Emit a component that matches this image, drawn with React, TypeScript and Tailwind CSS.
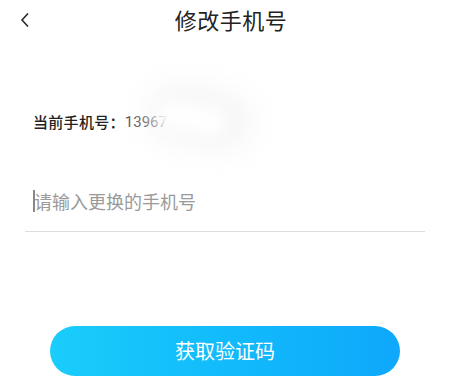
import { useState } from "react";

export default function App() {
  const [phone, setPhone] = useState("");

  return (
    <div
      className="w-[450px] h-[381px] bg-white overflow-hidden"
      style={{ fontFamily: '"Noto Sans CJK SC", "Noto Sans", sans-serif' }}
    >
      {/* Header */}
      <div className="relative h-[42px] flex items-center justify-center">
        <button className="absolute left-[18px] top-[11px] w-[14px] h-[18px] flex items-center justify-center">
          <svg width="10" height="16" viewBox="0 0 10 16" fill="none">
            <path d="M8 1.5L2 8l6 6.5" stroke="#222" strokeWidth="1.5" />
          </svg>
        </button>
        <h1 className="text-[22px] leading-none text-[#222] tracking-[0.5px] ml-[12px] -mt-[4px]">
          修改手机号
        </h1>
      </div>

      {/* Current phone */}
      <div className="relative mt-[69px] pl-[33px] flex items-center h-[22px]">
        <span className="text-[15px] text-[#222] font-medium tracking-[0.3px]">当前手机号：</span>
        <span className="text-[15px] text-[#555] ml-[0px]" style={{ fontFamily: "Roboto, sans-serif" }}>
          13967
        </span>
        <div className="absolute left-[150px] -top-[20px] w-[100px] h-[52px] rounded-full bg-[#f3f3f3] blur-lg rotate-[10deg]" />
        <div className="absolute left-[158px] -top-[8px] w-[70px] h-[30px] rounded-full bg-white blur-sm rotate-[10deg]" />
      </div>

      {/* Input */}
      <div className="mx-[25px] mt-[56px] border-b border-[#dedede] h-[43px] flex items-start">
        <div className="relative flex items-center h-[24px] pl-[8px] w-full">
          <span className="absolute left-[8px] top-[1px] w-[2px] h-[22px] bg-[#888]" />
          <input
            value={phone}
            onChange={(e) => setPhone(e.target.value)}
            placeholder="请输入更换的手机号"
            className="w-full text-[18px] text-[#333] placeholder:text-[#9a9a9a] outline-none bg-transparent pl-[1px]"
          />
        </div>
      </div>

      {/* Button */}
      <div className="mt-[94px] px-[50px]">
        <button className="w-full h-[50px] rounded-full bg-gradient-to-r from-[#1acdfb] to-[#0fa8fb] text-white text-[20px] flex items-center justify-center">
          获取验证码
        </button>
      </div>
    </div>
  );
}
